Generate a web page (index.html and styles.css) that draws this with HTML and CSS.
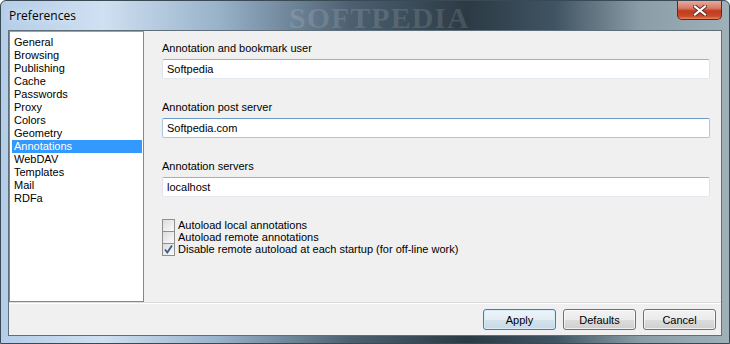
FILE: index.html
```html
<!DOCTYPE html>
<html lang="en">
<head>
  <meta charset="UTF-8" />
  <title>Preferences</title>
  <link rel="stylesheet" href="styles.css">
</head>
<body>

  <div class="window">
    <div class="titlebar">
      <span class="title">Preferences</span>
      <span class="watermark">SOFTPEDIA</span>
      <div class="close">
        <svg width="14" height="11" viewBox="0 0 14 11">
          <path d="M2 1.5 L12 9.5 M12 1.5 L2 9.5" stroke="#5a2a22" stroke-width="4" stroke-linecap="square" />
          <path d="M2 1.5 L12 9.5 M12 1.5 L2 9.5" stroke="#ffffff" stroke-width="2.2" stroke-linecap="square" />
        </svg>
      </div>
    </div>

    <div class="client">
      <div class="main">
        <ul class="page-list">
          <li>General</li>
          <li>Browsing</li>
          <li>Publishing</li>
          <li>Cache</li>
          <li>Passwords</li>
          <li>Proxy</li>
          <li>Colors</li>
          <li>Geometry</li>
          <li class="selected">Annotations</li>
          <li>WebDAV</li>
          <li>Templates</li>
          <li>Mail</li>
          <li>RDFa</li>
        </ul>

        <div class="panel">
          <div class="field">
            <label>Annotation and bookmark user</label>
            <div class="textbox">Softpedia</div>
          </div>
          <div class="field">
            <label>Annotation post server</label>
            <div class="textbox focused">Softpedia.com</div>
          </div>
          <div class="field">
            <label>Annotation servers</label>
            <div class="textbox">localhost</div>
          </div>

          <div class="checks">
            <div class="check"><span class="box"></span>Autoload local annotations</div>
            <div class="check"><span class="box"></span>Autoload remote annotations</div>
            <div class="check">
              <span class="box">
                <svg width="11" height="11" viewBox="0 0 11 11">
                  <path d="M2 5.5 L4.3 8.5 L9 1.5" fill="none" stroke="#3a5a8c" stroke-width="1.8" />
                </svg>
              </span>Disable remote autoload at each startup (for off-line work)
            </div>
          </div>
        </div>
      </div>

      <div class="footer">
        <button class="btn default">Apply</button>
        <button class="btn">Defaults</button>
        <button class="btn">Cancel</button>
      </div>
    </div>
  </div>

</body>
</html>
```

FILE: styles.css
```css
body {
  margin: 0;
  padding: 0;
  background: #fff;
  font-family: 'Liberation Sans', Arial, sans-serif;
  font-size: 11px;
  color: #000;
}

.window {
  width: 730px;
  height: 344px;
  display: flex;
  flex-direction: column;
  box-sizing: border-box;
  border: 1px solid #3a4a55;
  border-radius: 6px 6px 0 0;
  background: linear-gradient(90deg, #b4cde8 0%, #cfe0f1 14%, #98b2ca 30%, #4c6070 48%, #2c3a44 64%, #3f5462 76%, #8b9ea8 88%, #9fb0b9 100%);
  overflow: hidden;
}

.titlebar {
  height: 29px;
  display: flex;
  align-items: flex-start;
  position: relative;
}

.title {
  font-family: 'Open Sans', 'Noto Sans', sans-serif;
  font-size: 12px;
  margin: 6px 0 0 8px;
  color: #000;
  text-shadow: 0 0 8px rgba(255, 255, 255, 0.9);
}

.watermark {
  position: absolute;
  left: 288px;
  top: 0;
  font-family: 'Liberation Serif', serif;
  font-size: 30px;
  font-weight: bold;
  letter-spacing: 1px;
  color: rgba(255, 255, 255, 0.12);
}

.close {
  margin-left: auto;
  margin-right: 7px;
  width: 45px;
  height: 19px;
  box-sizing: border-box;
  border: 1px solid #5d2a22;
  border-top: none;
  border-radius: 0 0 5px 5px;
  background: linear-gradient(#e9a99c 0%, #d57a68 40%, #c23b1f 55%, #cc4a2a 85%, #e78a62 100%);
  display: flex;
  align-items: center;
  justify-content: center;
}

.client {
  flex: 1;
  margin: 0 7px 7px 7px;
  background: #f0f0f0;
  border: 1px solid #5f6f7a;
  display: flex;
  flex-direction: column;
}

.main {
  display: flex;
  height: 271px;
}

.page-list {
  list-style: none;
  margin: 0;
  padding: 4px 1px 0 2px;
  width: 130px;
  background: #fff;
  border: 1px solid #828790;
  border-top-color: #a0a0a0;
  line-height: 13px;
}

.page-list li {
  padding-left: 2px;
  height: 13px;
}

.page-list li.selected {
  background: #3399ff;
  color: #fff;
}

.panel {
  flex: 1;
  padding: 11px 11px 0 18px;
}

.field {
  margin-bottom: 22px;
}

.field label {
  display: block;
  height: 13px;
  line-height: 13px;
  margin-bottom: 4px;
}

.textbox {
  height: 20px;
  box-sizing: border-box;
  background: #fff;
  border: 1px solid #e2e3ea;
  border-top-color: #abadb3;
  border-bottom-color: #e3e9ef;
  border-radius: 2px;
  padding-left: 4px;
  line-height: 18px;
}

.textbox.focused {
  border-color: #a9c6e4;
  border-top-color: #6d9cc8;
}

.check {
  display: flex;
  align-items: center;
  height: 12px;
  line-height: 12px;
}

.box {
  width: 11px;
  height: 11px;
  border: 1px solid #8e8f8f;
  background: linear-gradient(135deg, #dcdcdc, #fbfbfb);
  margin-right: 3px;
  display: flex;
  align-items: center;
  justify-content: center;
}

.footer {
  flex: 1;
  border-top: 1px solid #dcdcdc;
  box-shadow: inset 0 1px 0 #fff;
  display: flex;
  justify-content: flex-end;
  align-items: flex-start;
  gap: 7px;
  padding: 6px 5px 0 0;
}

.btn {
  width: 73px;
  height: 21px;
  font-family: 'Liberation Sans', Arial, sans-serif;
  font-size: 11px;
  color: #000;
  border: 1px solid #707070;
  border-radius: 3px;
  background: linear-gradient(#f2f2f2 0%, #ebebeb 50%, #dddddd 51%, #cfcfcf 100%);
  box-shadow: inset 0 0 0 1px rgba(255, 255, 255, 0.7);
  padding: 0;
}

.btn.default {
  border-color: #3c7fb1;
  background: linear-gradient(#eef4f9 0%, #e4edf4 50%, #d4e2ec 51%, #c8d9e6 100%);
  box-shadow: inset 0 0 0 1px #d6ecf8;
}
```
